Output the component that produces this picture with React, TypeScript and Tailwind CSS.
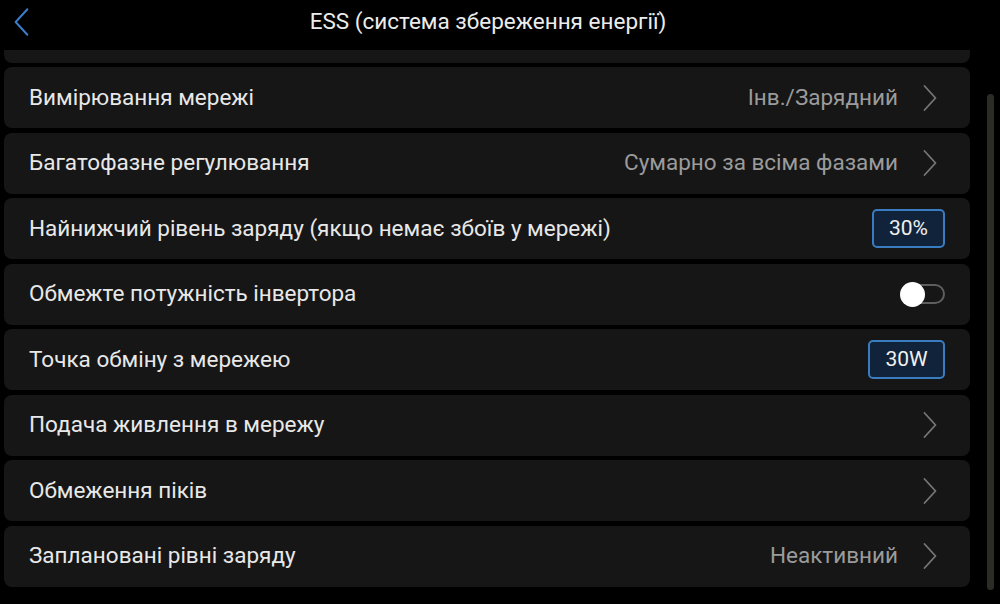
import React from 'react';

type Row = {
  label: string;
  value?: string;
  chevron?: boolean;
  box?: string;
  boxW?: string;
  toggle?: boolean;
};

const rows: Row[] = [
  { label: 'Вимірювання мережі', value: 'Інв./Зарядний', chevron: true },
  { label: 'Багатофазне регулювання', value: 'Сумарно за всіма фазами', chevron: true },
  { label: 'Найнижчий рівень заряду (якщо немає збоїв у мережі)', box: '30%', boxW: 'w-[73px]' },
  { label: 'Обмежте потужність інвертора', toggle: true },
  { label: 'Точка обміну з мережею', box: '30W', boxW: 'w-[77px]' },
  { label: 'Подача живлення в мережу', chevron: true },
  { label: 'Обмеження піків', chevron: true },
  { label: 'Заплановані рівні заряду', value: 'Неактивний', chevron: true },
];

function Chevron({ color, className, left }: { color: string; className?: string; left?: boolean }) {
  return (
    <svg viewBox="0 0 16 28" className={className} fill="none">
      <path
        d={left ? 'M13.5 2 L2.5 14 L13.5 26' : 'M2.5 2 L13.5 14 L2.5 26'}
        stroke={color}
        strokeWidth="1.8"
        strokeLinecap="round"
        strokeLinejoin="round"
      />
    </svg>
  );
}

export default function App() {
  return (
    <div className="w-[1000px] h-[604px] bg-black overflow-hidden text-[#e6e6e6]" style={{ fontFamily: 'Roboto, "Noto Sans", sans-serif' }}>
      <div className="h-[50px] flex items-center relative">
        <Chevron left color="#3b7fcc" className="w-[17px] h-[30px] ml-[13px] -mt-[7px]" />
        <div className="absolute left-0 right-0 top-[5px] text-center text-[22.5px] text-[#ececec]">
          <span className="relative left-[-12px]">ESS (система збереження енергії)</span>
        </div>
      </div>
      <div className="flex">
        <div className="w-[966px] ml-[4px] flex flex-col gap-[4.5px]">
          <div className="h-[12.5px] bg-[#161616] rounded-b-[8px]" />
          {rows.map((r) => (
            <div key={r.label} className="h-[61px] bg-[#161616] rounded-[8px] flex items-center pl-[25px] pr-[25px]">
              <span className="text-[22.5px] text-[#e8e8e8] flex-1">{r.label}</span>
              {r.value && <span className="text-[22.5px] text-[#9b9b9b] mr-[24px]">{r.value}</span>}
              {r.chevron && <Chevron color="#767676" className="w-[16px] h-[28px] mr-[7px]" />}
              {r.box && (
                <div className={`${r.boxW} h-[39px] rounded-[5px] border-2 border-[#3a7cc0] bg-[#10233a] flex items-center justify-center text-[21px] text-[#f0f0f0]`}>
                  {r.box}
                </div>
              )}
              {r.toggle && (
                <div className="relative w-[45px] h-[25px] flex items-center">
                  <div className="absolute left-[5px] right-0 h-[20px] rounded-full border-2 border-[#5e5e5e]" />
                  <div className="absolute left-0 w-[25px] h-[25px] rounded-full bg-white" />
                </div>
              )}
            </div>
          ))}
        </div>
        <div className="ml-[17px] pt-[44px]">
          <div className="w-[7px] h-[496px] rounded-full bg-[#2c2c27]" />
        </div>
      </div>
    </div>
  );
}
